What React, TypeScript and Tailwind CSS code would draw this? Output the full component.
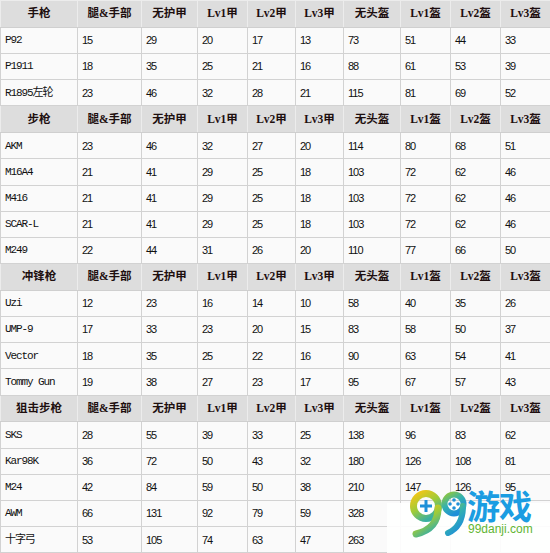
import React from "react"

type Group = {
    title: string
    rows: (string | number)[][]
}

const heads = ["腿&手部", "无护甲", "Lv1甲", "Lv2甲", "Lv3甲", "无头盔", "Lv1盔", "Lv2盔", "Lv3盔"]

const groups: Group[] = [
    {
        title: "手枪",
        rows: [
            ["P92", 15, 29, 20, 17, 13, 73, 51, 44, 33],
            ["P1911", 18, 35, 25, 21, 16, 88, 61, 53, 39],
            ["R1895左轮", 23, 46, 32, 28, 21, 115, 81, 69, 52],
        ],
    },
    {
        title: "步枪",
        rows: [
            ["AKM", 23, 46, 32, 27, 20, 114, 80, 68, 51],
            ["M16A4", 21, 41, 29, 25, 18, 103, 72, 62, 46],
            ["M416", 21, 41, 29, 25, 18, 103, 72, 62, 46],
            ["SCAR-L", 21, 41, 29, 25, 18, 103, 72, 62, 46],
            ["M249", 22, 44, 31, 26, 20, 110, 77, 66, 50],
        ],
    },
    {
        title: "冲锋枪",
        rows: [
            ["Uzi", 12, 23, 16, 14, 10, 58, 40, 35, 26],
            ["UMP-9", 17, 33, 23, 20, 15, 83, 58, 50, 37],
            ["Vector", 18, 35, 25, 22, 16, 90, 63, 54, 41],
            ["Tommy Gun", 19, 38, 27, 23, 17, 95, 67, 57, 43],
        ],
    },
    {
        title: "狙击步枪",
        rows: [
            ["SKS", 28, 55, 39, 33, 25, 138, 96, 83, 62],
            ["Kar98K", 36, 72, 50, 43, 32, 180, 126, 108, 81],
            ["M24", 42, 84, 59, 50, 38, 210, 147, 126, 95],
            ["AWM", 66, 131, 92, 79, 59, 328, "", "", ""],
            ["十字弓", 53, 105, 74, 63, 47, 263, "", "", ""],
        ],
    },
]

const widths = ["w-[77px]", "w-[64px]", "w-[56px]", "w-[50px]", "w-[48px]", "w-[48px]", "w-[57px]", "w-[50px]", "w-[50px]", "w-[50px]"]

// watermark sits on top of the table's bottom-right corner
const Logo = () => (
    <div className="absolute left-[387px] top-[503px] w-[163px] h-[50px] bg-white/90">
        <svg className="absolute left-[20px] -top-[14px]" width="64" height="52" viewBox="0 0 64 52">
            <defs>
                <linearGradient id="g1" x1="0" y1="0" x2="0.6" y2="1">
                    <stop offset="0" stopColor="#f7c614" />
                    <stop offset="0.55" stopColor="#9ccb3b" />
                    <stop offset="1" stopColor="#3bb0a0" />
                </linearGradient>
                <linearGradient id="g2" x1="0" y1="0" x2="0.6" y2="1">
                    <stop offset="0" stopColor="#8dc63f" />
                    <stop offset="0.5" stopColor="#33b1b0" />
                    <stop offset="1" stopColor="#1e8fd8" />
                </linearGradient>
            </defs>
            <circle cx="19" cy="17" r="12.5" fill="none" stroke="url(#g1)" strokeWidth="7" />
            <path d="M31 19 C31 34 22 42 9 45" fill="none" stroke="url(#g1)" strokeWidth="7" strokeLinecap="round" />
            <path d="M19 11 V23 M13 17 H25" stroke="#1e90d8" strokeWidth="3" />
            <circle cx="47" cy="15" r="9.5" fill="none" stroke="url(#g2)" strokeWidth="6" />
            <path d="M56 17 C56 31 50 40 41 44" fill="none" stroke="url(#g2)" strokeWidth="6" strokeLinecap="round" />
            <circle cx="47" cy="11" r="1.8" fill="#1e90d8" />
            <circle cx="47" cy="19" r="1.8" fill="#1e90d8" />
            <circle cx="43" cy="15" r="1.8" fill="#1e90d8" />
            <circle cx="51" cy="15" r="1.8" fill="#1e90d8" />
        </svg>
        <div className="absolute left-[80px] -top-[14px] text-[33px] leading-none font-bold text-[#1b9de2] tracking-[-1px] [font-family:'Noto_Sans_CJK_SC',sans-serif]">
            游戏
        </div>
        <div className="absolute left-[81px] top-[20px] text-[12px] leading-none text-[#62b532] [font-family:'Liberation_Sans',Arial,sans-serif]">
            99danji.com
        </div>
    </div>
)

export default function App() {
    return (
        <div className="relative w-[550px] h-[553px] overflow-hidden bg-white">
            <table className="table-fixed border-collapse w-[550px]">
                <colgroup>
                    {widths.map((w, i) => (
                        <col key={i} className={w} />
                    ))}
                </colgroup>
                <tbody>
                    {groups.map((g) => (
                        <React.Fragment key={g.title}>
                            <tr className="h-[26.8px] bg-[#dddddd]">
                                {[g.title, ...heads].map((h, i) => (
                                    <th
                                        key={i}
                                        className="p-0 border border-[#ececec] border-b-[#cfcfcf] text-center align-middle text-[11.5px] font-bold text-[#1e0f0f] whitespace-nowrap [font-family:'Liberation_Serif','Noto_Sans_CJK_SC',serif]"
                                    >
                                        {h}
                                    </th>
                                ))}
                            </tr>
                            {g.rows.map((r, ri) => (
                                <tr key={ri} className="h-[26.2px] bg-[#fafafa]">
                                    {r.map((c, ci) => (
                                        <td
                                            key={ci}
                                            className={
                                                ci === 0
                                                    ? "p-0 pl-[4px] border border-[#d2d2d2] align-middle text-[11px] tracking-[-1.1px] text-[#111] whitespace-nowrap [font-family:'Liberation_Mono','Noto_Sans_CJK_SC',monospace]"
                                                    : "p-0 pl-[4px] border border-[#d2d2d2] align-middle text-[11px] tracking-[-1px] text-[#111] whitespace-nowrap [font-family:'Liberation_Sans',Arial,sans-serif]"
                                            }
                                        >
                                            {c}
                                        </td>
                                    ))}
                                </tr>
                            ))}
                        </React.Fragment>
                    ))}
                </tbody>
            </table>
            <Logo />
        </div>
    )
}
